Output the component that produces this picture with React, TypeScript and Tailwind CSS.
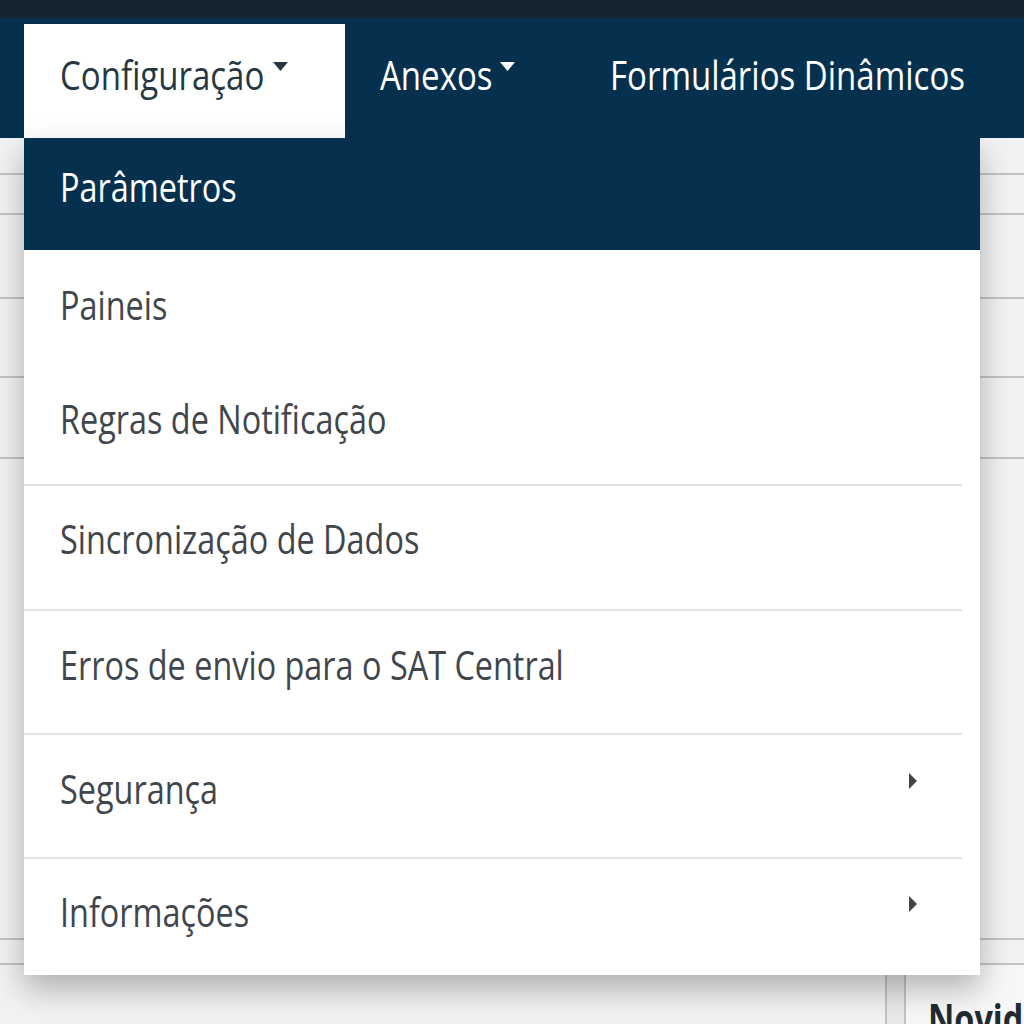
import React from "react";

const NAVY = "bg-[#05314f]";

function Squeeze({ children, className = "" }: { children: React.ReactNode; className?: string }) {
  // the source screenshot is horizontally squeezed, so the text is too
  return (
    <span className={`inline-block origin-left scale-x-[0.79] whitespace-nowrap ${className}`}>
      {children}
    </span>
  );
}

function NavText({ children, className = "" }: { children: React.ReactNode; className?: string }) {
  return (
    <span className={`inline-block origin-left scale-x-[0.805] whitespace-nowrap ${className}`}>
      {children}
    </span>
  );
}

function DownCaret({ color }: { color: string }) {
  return (
    <svg width="15" height="9" viewBox="0 0 15 9" className="mt-[8px] shrink-0">
      <path d="M0 0 H15 L7.5 9 Z" fill={color} />
    </svg>
  );
}

function RightCaret() {
  return (
    <svg width="8" height="16" viewBox="0 0 8 16" className="mt-[5px] mr-[63px] shrink-0">
      <path d="M0 0 L8 8 L0 16 Z" fill="#3f454b" />
    </svg>
  );
}

interface Item {
  label: string;
  h: string;
  pt: string;
  sub?: boolean;
  divider?: boolean;
}

const ITEMS: Item[] = [
  { label: "Paineis", h: "h-[115px]", pt: "pt-[34px]" },
  { label: "Regras de Notificação", h: "h-[119px]", pt: "pt-[33px]", divider: true },
  { label: "Sincronização de Dados", h: "h-[123px]", pt: "pt-[32px]", divider: true },
  { label: "Erros de envio para o SAT Central", h: "h-[122px]", pt: "pt-[33px]", divider: true },
  { label: "Segurança", h: "h-[122px]", pt: "pt-[33px]", sub: true, divider: true },
  { label: "Informações", h: "h-[116px]", pt: "pt-[32px]", sub: true },
];

export default function App() {
  return (
    <div className="relative w-[1024px] h-[1024px] overflow-hidden bg-[#f2f2f2] font-['Open_Sans',sans-serif] text-[41px] leading-[41px]">
      {/* top strip */}
      <div className="h-[18px] bg-[#162430]" />

      {/* navbar */}
      <nav className={`h-[120px] ${NAVY} flex pl-[24px] overflow-hidden`}>
        <div className="mt-[6px] w-[321px] shrink-0 bg-white pl-[36px] pt-[30px] flex items-start">
          <div className="w-[213px] shrink-0">
            <NavText className="text-[#263744]">Configuração</NavText>
          </div>
          <DownCaret color="#263744" />
        </div>
        <div className="mt-[6px] w-[230px] shrink-0 pl-[35px] pt-[30px] flex items-start">
          <div className="w-[120px] shrink-0">
            <NavText className="text-white">Anexos</NavText>
          </div>
          <DownCaret color="#ffffff" />
        </div>
        <div className="mt-[6px] shrink-0 pl-[35px] pt-[30px]">
          <NavText className="text-white">Formulários Dinâmicos</NavText>
        </div>
      </nav>

      {/* page content behind the dropdown */}
      <div className="flex flex-col">
        <div className="h-[37px] border-b-2 border-[#c3c3c3]" />
        <div className="h-[40px] border-b-2 border-[#c3c3c3]" />
        <div className="h-[84px] border-b-2 border-[#c3c3c3]" />
        <div className="h-[79px] border-b-2 border-[#c3c3c3]" />
        <div className="h-[81px] border-b-2 border-[#c3c3c3]" />
        <div className="h-[481px] border-b-2 border-[#c3c3c3]" />
        <div className="h-[25px] border-b-2 border-[#c3c3c3]" />
        <div className="flex h-[80px]">
          <div className="w-[885px] shrink-0" />
          <div className="w-[21px] shrink-0 border-x-2 border-[#c3c3c3] bg-[#e9e9e9]" />
          <div className="flex-1 min-w-0 overflow-hidden bg-[#f7f7f7] pl-[22px] pt-[33px]">
            <Squeeze className="font-bold text-[#1f2a33]">Novidades</Squeeze>
          </div>
        </div>
      </div>

      {/* dropdown menu */}
      <div className="absolute left-[24px] top-[138px] w-[956px] bg-white shadow-[0_14px_30px_rgba(0,0,0,0.28)]">
        <div className={`h-[112px] ${NAVY} pl-[36px] pt-[28px]`}>
          <Squeeze className="text-white">Parâmetros</Squeeze>
        </div>
        {ITEMS.map((it) => (
          <div key={it.label}>
            <div className={`${it.h} ${it.pt} pl-[36px] flex items-start justify-between`}>
              <Squeeze className="text-[#40464c]">{it.label}</Squeeze>
              {it.sub && <RightCaret />}
            </div>
            {it.divider && <div className="h-[2px] mr-[18px] bg-[#e2e2e2]" />}
          </div>
        ))}
      </div>
    </div>
  );
}
